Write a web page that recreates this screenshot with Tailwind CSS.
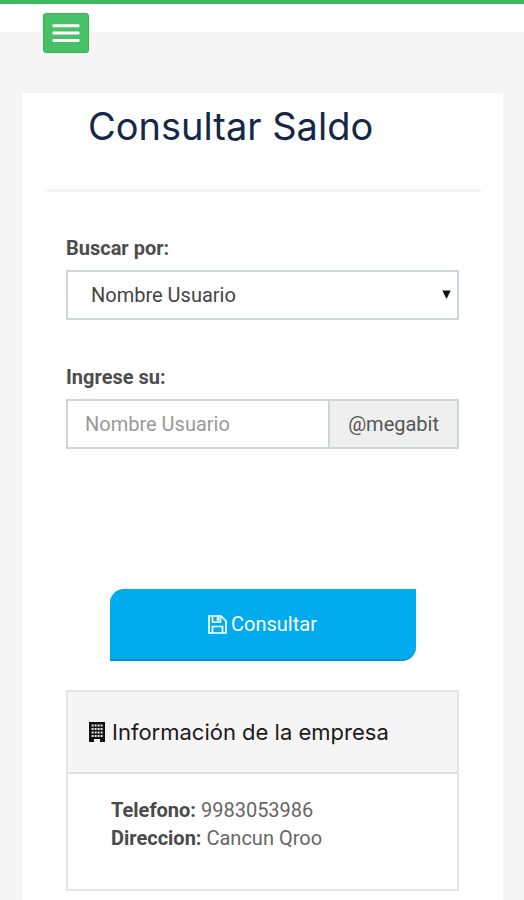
<!DOCTYPE html>
<html lang="es">
<head>
<meta charset="utf-8">
<meta name="viewport" content="width=device-width, initial-scale=1">
<title>Consultar Saldo</title>
<script src="https://cdn.jsdelivr.net/npm/@tailwindcss/browser@4"></script>
</head>
<body class="min-h-screen flex flex-col bg-[#f5f5f5] font-['Roboto',sans-serif] text-[20px] leading-7 text-[#4d4d4d]">
  <header class="h-8 border-t-4 border-[#3fbb5f] bg-white px-[43px] pt-[9px]">
    <button type="button" aria-label="Menú" class="flex h-10 w-[46px] items-center justify-center rounded-[3px] border border-[#32b556] bg-[#48c067]">
      <svg class="h-5 w-7" viewBox="0 0 28 20" fill="#fff" aria-hidden="true">
        <rect x="0.5" y="1.2" width="27" height="3" rx="0.8"/><rect x="0.5" y="8.6" width="27" height="3" rx="0.8"/><rect x="0.5" y="16" width="27" height="3" rx="0.8"/>
      </svg>
    </button>
  </header>
  <main class="mr-[21px] ml-[22px] mt-[61px] flex-1 bg-white px-[22px] pb-[9px]">
    <h1 class="border-b-3 border-[#f4f4f4] px-[44px] pt-[9px] pb-[39px] font-['Inter',sans-serif] text-[38px] leading-12 text-[#152847]">Consultar Saldo</h1>
    <form class="px-[22px] pt-[42px]">
      <label for="tipo" class="block font-bold">Buscar por:</label>
      <div class="relative mt-2">
        <select id="tipo" class="block h-[50px] w-full appearance-none rounded-[1px] border-2 border-[#cfd4d5] bg-white px-[23px] text-[#444]">
          <option>Nombre Usuario</option>
        </select>
        <svg class="pointer-events-none absolute top-5 right-2 h-[9px] w-[9px]" viewBox="0 0 9 9" fill="#111" aria-hidden="true"><path d="M0.3 0.5h8.4L4.5 9z"/></svg>
      </div>
      <label for="usuario" class="mt-[43px] block font-bold">Ingrese su:</label>
      <div class="mt-2 flex h-[50px] border-2 border-[#cfd4d5]">
        <input id="usuario" type="text" placeholder="Nombre Usuario" class="min-w-0 flex-1 bg-white px-[17px] placeholder:text-[#999]">
        <span class="flex items-center border-l-2 border-[#cfd4d5] bg-[#efefef] px-[18px] text-[#555]">@megabit</span>
      </div>
      <button type="submit" class="mx-auto mt-[140px] flex h-[72px] w-[306px] max-w-full items-center justify-center gap-1 rounded-tl-[14px] rounded-br-[14px] border-b-2 border-[#0594d0] bg-[#00acee] text-white">
        <svg class="h-[19px] w-[19px]" viewBox="0 0 19 19" fill="none" stroke="#fff" stroke-width="1.7" aria-hidden="true">
          <path d="M1 1h12l5 5v12H1z"/><path d="M4.5 1v6h8V1M4.5 18v-6.5h10V18"/><path d="M9.2 2.2h1.6v3H9.2z" fill="#fff" stroke-width="1"/>
        </svg>
        Consultar
      </button>
    </form>
    <section class="mx-[22px] mt-[29px] border-2 border-[#e4e4e4]">
      <h2 class="flex items-center gap-[7px] border-b-2 border-[#dedede] bg-[#f5f5f5] px-[21px] py-[26px] font-['Inter',sans-serif] text-[22px] leading-7 text-[#1b1b1b]">
        <svg class="h-5 w-4 shrink-0" viewBox="0 0 16 20" aria-hidden="true">
          <path fill="#111" d="M0 0h16v20h-5v-3H5v3H0z"/>
          <path fill="#e8e8e8" d="M2.6 2.5h2v2h-2zM5.6 2.5h2v2h-2zM8.6 2.5h2v2h-2zM11.6 2.5h2v2h-2zM2.6 6h2v2h-2zM5.6 6h2v2h-2zM8.6 6h2v2h-2zM11.6 6h2v2h-2zM2.6 9.5h2v2h-2zM5.6 9.5h2v2h-2zM8.6 9.5h2v2h-2zM11.6 9.5h2v2h-2zM2.6 13h2v2h-2zM5.6 13h2v2h-2zM8.6 13h2v2h-2zM11.6 13h2v2h-2z"/>
        </svg>
        Información de la empresa
      </h2>
      <div class="px-[43px] pt-[22px] pb-[37px] text-[#666]">
        <p><strong class="text-[#4a4a4a]">Telefono:</strong> 9983053986</p>
        <p><strong class="text-[#4a4a4a]">Direccion:</strong> Cancun Qroo</p>
      </div>
    </section>
  </main>
</body>
</html>
